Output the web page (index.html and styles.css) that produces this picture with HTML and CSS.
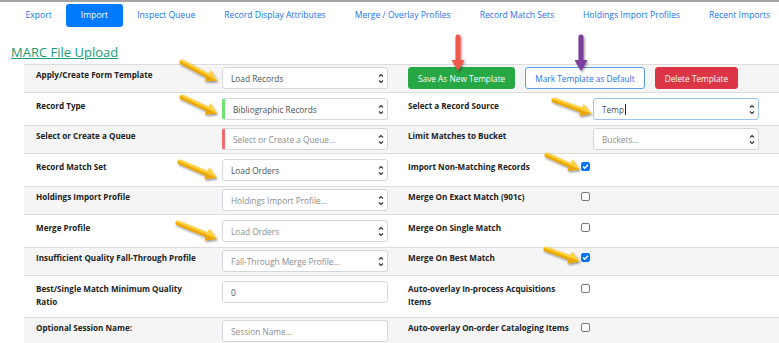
FILE: index.html
```html
<!DOCTYPE html>
<html lang="en">
<head>
    <meta charset="UTF-8">
    <meta name="viewport" content="width=device-width, initial-scale=1.0">
    <title>MARC Import</title>
    <link rel="stylesheet" href="styles.css">
</head>
<body>
<div class="page">
    <div class="topline"></div>

    <!-- Tabs -->
    <ul class="tabs">
        <li><a href="#">Export</a></li>
        <li><a href="#" class="active">Import</a></li>
        <li><a href="#">Inspect Queue</a></li>
        <li><a href="#">Record Display Attributes</a></li>
        <li><a href="#">Merge / Overlay Profiles</a></li>
        <li><a href="#">Record Match Sets</a></li>
        <li><a href="#">Holdings Import Profiles</a></li>
        <li><a href="#">Recent Imports</a></li>
    </ul>

    <h2 class="title"><a href="#">MARC File Upload</a></h2>

    <!-- Upload form -->
    <div class="form">
        <div class="row">
            <div class="label">Apply/Create Form Template</div>
            <div class="select"><span class="value">Load Records</span><svg class="chev" viewBox="0 0 6 14"><path d="M1 5.5 3 3.5 5 5.5M1 9.5 3 11.5 5 9.5"/></svg></div>
            <div class="buttons">
                <button class="btn btn-green">Save As New Template</button>
                <button class="btn btn-outline">Mark Template as Default</button>
                <button class="btn btn-red">Delete Template</button>
            </div>
        </div>

        <div class="row">
            <div class="label">Record Type</div>
            <div class="select ok"><span class="value">Bibliographic Records</span><svg class="chev" viewBox="0 0 6 14"><path d="M1 5.5 3 3.5 5 5.5M1 9.5 3 11.5 5 9.5"/></svg></div>
            <div class="label right">Select a Record Source</div>
            <div class="select side focus"><span class="value typing">Temp</span><svg class="chev" viewBox="0 0 6 14"><path d="M1 5.5 3 3.5 5 5.5M1 9.5 3 11.5 5 9.5"/></svg></div>
        </div>

        <div class="row">
            <div class="label">Select or Create a Queue</div>
            <div class="select bad"><span class="hint">Select or Create a Queue...</span><svg class="chev" viewBox="0 0 6 14"><path d="M1 5.5 3 3.5 5 5.5M1 9.5 3 11.5 5 9.5"/></svg></div>
            <div class="label right">Limit Matches to Bucket</div>
            <div class="select side"><span class="hint">Buckets...</span><svg class="chev" viewBox="0 0 6 14"><path d="M1 5.5 3 3.5 5 5.5M1 9.5 3 11.5 5 9.5"/></svg></div>
        </div>

        <div class="row">
            <div class="label">Record Match Set</div>
            <div class="select"><span class="value">Load Orders</span><svg class="chev" viewBox="0 0 6 14"><path d="M1 5.5 3 3.5 5 5.5M1 9.5 3 11.5 5 9.5"/></svg></div>
            <div class="label right">Import Non-Matching Records</div>
            <div class="check on"><svg viewBox="0 0 9 9"><path d="M2 4.6 3.7 6.2 7 2.8"/></svg></div>
        </div>

        <div class="row">
            <div class="label">Holdings Import Profile</div>
            <div class="select"><span class="hint">Holdings Import Profile...</span><svg class="chev" viewBox="0 0 6 14"><path d="M1 5.5 3 3.5 5 5.5M1 9.5 3 11.5 5 9.5"/></svg></div>
            <div class="label right">Merge On Exact Match (901c)</div>
            <div class="check"></div>
        </div>

        <div class="row">
            <div class="label">Merge Profile</div>
            <div class="select"><span class="hint">Load Orders</span><svg class="chev" viewBox="0 0 6 14"><path d="M1 5.5 3 3.5 5 5.5M1 9.5 3 11.5 5 9.5"/></svg></div>
            <div class="label right">Merge On Single Match</div>
            <div class="check"></div>
        </div>

        <div class="row">
            <div class="label">Insufficient Quality Fall-Through Profile</div>
            <div class="select"><span class="hint">Fall-Through Merge Profile...</span><svg class="chev" viewBox="0 0 6 14"><path d="M1 5.5 3 3.5 5 5.5M1 9.5 3 11.5 5 9.5"/></svg></div>
            <div class="label right">Merge On Best Match</div>
            <div class="check on"><svg viewBox="0 0 9 9"><path d="M2 4.6 3.7 6.2 7 2.8"/></svg></div>
        </div>

        <div class="row">
            <div class="label">Best/Single Match Minimum Quality<br>Ratio</div>
            <div class="select"><span class="value">0</span></div>
            <div class="label right">Auto-overlay In-process Acquisitions Items</div>
            <div class="check"></div>
        </div>

        <div class="row">
            <div class="label">Optional Session Name:</div>
            <div class="select"><span class="hint">Session Name...</span></div>
            <div class="label right">Auto-overlay On-order Cataloging Items</div>
            <div class="check"></div>
        </div>
    </div>

    <!-- Annotation arrows drawn over the screenshot -->
    <svg class="notes" width="779" height="343" viewBox="0 0 779 343">
        <defs>
            <linearGradient id="gold" x1="0" y1="-1" x2="0" y2="1" gradientUnits="userSpaceOnUse">
                <stop offset="0" stop-color="#ffd23a"/>
                <stop offset="1" stop-color="#eba400"/>
            </linearGradient>
            <filter id="shade" x="-30%" y="-50%" width="160%" height="200%">
                <feDropShadow dx="1" dy="1.5" stdDeviation="1" flood-color="#000" flood-opacity="0.45"/>
            </filter>
        </defs>
        <g filter="url(#shade)" fill="url(#gold)">
            <path transform="translate(182 62) rotate(28)" d="M0 -2.5H29V-6.5L40 0 29 6.5V2.5H0A2.5 2.5 0 0 1 0 -2.5Z"/>
            <path transform="translate(182 97) rotate(25)" d="M0 -2.5H28V-6.5L39 0 28 6.5V2.5H0A2.5 2.5 0 0 1 0 -2.5Z"/>
            <path transform="translate(180 162) rotate(23)" d="M0 -2.5H29V-6.5L40 0 29 6.5V2.5H0A2.5 2.5 0 0 1 0 -2.5Z"/>
            <path transform="translate(178 223) rotate(22)" d="M0 -2.5H31V-6.5L42 0 31 6.5V2.5H0A2.5 2.5 0 0 1 0 -2.5Z"/>
            <path transform="translate(554 100) rotate(20)" d="M0 -2.5H29V-6.5L40 0 29 6.5V2.5H0A2.5 2.5 0 0 1 0 -2.5Z"/>
            <path transform="translate(547 155) rotate(24)" d="M0 -2.5H25V-6.5L36 0 25 6.5V2.5H0A2.5 2.5 0 0 1 0 -2.5Z"/>
            <path transform="translate(546 249) rotate(20)" d="M0 -2.5H25V-6.5L36 0 25 6.5V2.5H0A2.5 2.5 0 0 1 0 -2.5Z"/>
        </g>
        <g filter="url(#shade)">
            <path fill="#f2584a" transform="translate(458 37) rotate(90)" d="M0 -2.5H23V-6.5L34 0 23 6.5V2.5H0A2.5 2.5 0 0 1 0 -2.5Z"/>
            <path fill="#7a3d9c" transform="translate(581 37) rotate(90)" d="M0 -2.5H23V-6.5L34 0 23 6.5V2.5H0A2.5 2.5 0 0 1 0 -2.5Z"/>
        </g>
    </svg>
</div>
</body>
</html>
```

FILE: styles.css
```css
/* Global */
body {
    margin: 0;
    font-family: 'Open Sans', sans-serif;
    font-size: 8.3px;
    color: #222;
    background: #fff;
}

.page {
    position: relative;
    height: 343px;
    overflow: hidden;
}

.topline {
    height: 2px;
    background: #a3a3a3;
}

/* Tabs */
.tabs {
    list-style: none;
    display: flex;
    margin: 2px 0 0 11px;
    padding: 0;
}

.tabs li {
    flex-shrink: 0;
}

.tabs a {
    display: block;
    height: 23px;
    line-height: 23px;
    padding: 0 14.5px;
    color: #1a73f0;
    text-decoration: none;
    font-size: 8.6px;
    white-space: nowrap;
    border-radius: 3px;
}

.tabs a.active {
    background: #007bff;
    color: #fff;
}

/* Heading */
.title {
    margin: 16px 0 3px 11px;
    font-size: 13px;
    line-height: 18px;
    font-weight: 400;
}

.title a {
    color: #169b73;
    text-decoration: underline;
}

/* Form rows */
.form {
    margin-left: 24px;
}

.row {
    display: grid;
    grid-template-columns: 186px 166px 20px 170px 181px;
    align-items: start;
    padding: 5px 0 5px 12px;
    border-top: 1px solid #dcdcdc;
}

.row:nth-child(odd) {
    background: #f5f5f5;
    padding-top: 2px;
    padding-bottom: 3px;
}

.label {
    padding: 1px 16px 4px 0;
    line-height: 13px;
    font-size: 8.1px;
    font-weight: 700;
}

.label.right {
    grid-column: 4;
    padding-right: 1px;
}

/* Select boxes and inputs */
.select {
    display: flex;
    align-items: center;
    height: 22px;
    padding: 0 3px 0 8px;
    border: 1px solid #d3d7dc;
    border-radius: 3px;
    background: #fff;
    box-sizing: border-box;
    white-space: nowrap;
}

.select.side {
    grid-column: 5;
    margin-left: 15px;
}

.select.ok {
    border-left: 3px solid #6be474;
}

.select.bad {
    border-left: 3px solid #f26b6b;
}

.select.focus {
    border-color: #9cc4ef;
}

.value {
    color: #4a4f55;
}

.hint {
    color: #8c8c8c;
}

.typing {
    border-right: 1px solid #222;
    padding-right: 1px;
}

.chev {
    margin-left: auto;
    width: 6px;
    height: 14px;
}

.chev path {
    fill: none;
    stroke: #333;
    stroke-width: 1.2;
}

/* Checkboxes */
.check {
    grid-column: 5;
    width: 9px;
    height: 9px;
    margin: 3px 0 0 3px;
    border: 1px solid #7a7a7a;
    border-radius: 2px;
    background: #fff;
    box-sizing: border-box;
}

.check.on {
    background: #0b74f5;
    border-color: #0b74f5;
}

.check svg {
    display: block;
    width: 9px;
    height: 9px;
    margin: -1px;
}

.check path {
    fill: none;
    stroke: #fff;
    stroke-width: 1.4;
}

/* Buttons */
.buttons {
    grid-column: 4 / 6;
    display: flex;
    gap: 10px;
}

.btn {
    height: 22px;
    padding: 0 9px;
    font-family: 'Open Sans', sans-serif;
    font-size: 8.3px;
    border: 1px solid transparent;
    border-radius: 3px;
    cursor: pointer;
}

.btn-green {
    background: #28a745;
    border-color: #28a745;
    color: #fff;
}

.btn-outline {
    background: #fff;
    border-color: #5a9ef0;
    color: #1a73f0;
}

.btn-red {
    background: #dc3545;
    border-color: #dc3545;
    color: #fff;
}

/* Arrows */
.notes {
    position: absolute;
    top: 0;
    left: 0;
    pointer-events: none;
}
```
